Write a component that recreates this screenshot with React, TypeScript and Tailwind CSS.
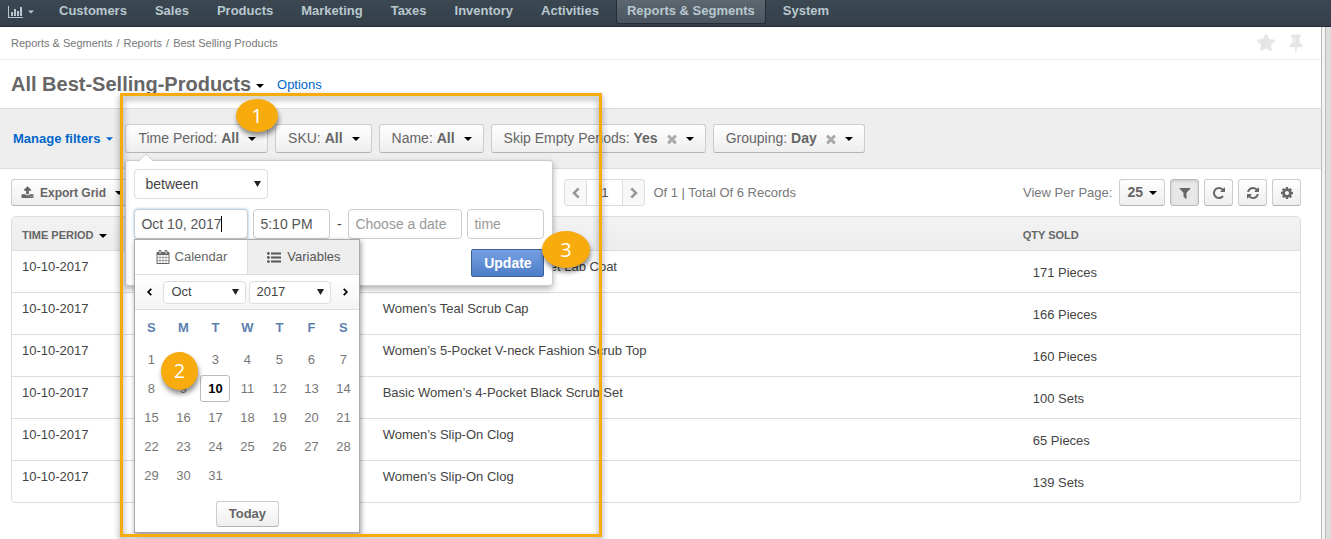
import React from "react";

const PATHS = {
  star: "M1728 647q0 22-26 48l-363 354 86 500q1 7 1 20 0 21-10.5 35.5t-30.5 14.5q-19 0-40-12l-449-236-449 236q-22 12-40 12-21 0-31.5-14.5t-10.5-35.5q0-6 2-20l86-500-364-354q-25-27-25-48 0-37 56-46l502-73 225-455q19-41 49-41t49 41l225 455 502 73q56 9 56 46z",
  pin: "M800 864v-448q0-14-9-23t-23-9-23 9-9 23v448q0 14 9 23t23 9 23-9 9-23zm672 352q0 26-19 45t-45 19h-429l-51 483q-2 12-10.5 20.5t-20.5 8.5h-1q-27 0-32-27l-76-485h-404q-26 0-45-19t-19-45q0-123 78.5-221.5t177.5-98.5v-512q-52 0-90-38t-38-90 38-90 90-38h640q52 0 90 38t38 90-38 90-90 38v512q99 0 177.5 98.5t78.5 221.5z",
  filter:
    "M1595 295q17 41-14 70l-493 493v742q0 42-39 59-13 5-25 5-27 0-45-19l-256-256q-19-19-19-45v-486l-493-493q-31-29-14-70 17-39 59-39h1280q42 0 59 39z",
  repeat:
    "M1664 256v448q0 26-19 45t-45 19h-448q-42 0-59-40-17-39 14-69l138-138q-148-137-349-137-104 0-198.5 40.5t-163.5 109.5-109.5 163.5-40.5 198.5 40.5 198.5 109.5 163.5 163.5 109.5 198.5 40.5q119 0 225-52t179-147q7-10 23-12 15 0 25 9l137 138q9 8 9.5 20.5t-7.5 22.5q-109 132-264 204.5t-327 72.5q-156 0-298-61t-245-164-164-245-61-298 61-298 164-245 245-164 298-61q147 0 284.5 55.5t244.5 156.5l130-129q29-31 70-14 39 17 39 59z",
  refresh:
    "M1639 1056q0 5-1 7-64 268-268 434.5t-478 166.5q-146 0-282.5-55t-243.5-157l-129 129q-19 19-45 19t-45-19-19-45v-448q0-26 19-45t45-19h448q26 0 45 19t19 45-19 45l-137 137q71 66 161 102t187 36q134 0 250-65t186-179q11-17 53-117 8-23 30-23h192q13 0 22.5 9.5t9.5 22.5zm25-800v448q0 26-19 45t-45 19h-448q-26 0-45-19t-19-45 19-45l138-138q-148-137-349-137-134 0-250 65t-186 179q-11 17-53 117-8 23-30 23h-199q-13 0-22.5-9.5t-9.5-22.5v-7q65-268 270-434.5t480-166.5q146 0 284 55.5t245 156.5l130-129q19-19 45-19t45 19 19 45z",
  cog: "M1152 896q0-106-75-181t-181-75-181 75-75 181 75 181 181 75 181-75 75-181zm512-109v222q0 12-8 23t-20 13l-185 28q-19 54-39 91 35 50 107 138 10 12 10 25t-9 23q-27 37-99 108t-94 71q-12 0-26-9l-138-108q-44 23-91 38-16 136-29 186-7 28-36 28h-222q-14 0-24.5-8.5t-11.5-21.5l-28-184q-49-16-90-37l-141 107q-10 9-25 9-14 0-25-11-126-114-165-168-7-10-7-23 0-12 8-23 15-21 51-66.5t54-70.5q-27-50-41-99l-183-27q-13-2-21-12.5t-8-23.5v-222q0-12 8-23t19-13l186-28q14-46 39-92-40-57-107-138-10-12-10-24 0-10 9-23 26-36 98.5-107.5t94.5-71.5q13 0 26 10l138 107q44-23 91-38 16-136 29-186 7-28 36-28h222q14 0 24.5 8.5t11.5 21.5l28 184q49 16 90 37l142-107q9-9 24-9 13 0 25 10 129 119 165 170 7 8 7 22 0 12-8 23-15 21-51 66.5t-54 70.5q26 50 41 98l183 28q13 2 21 12.5t8 23.5z",
  upload:
    "M1344 1472q0-26-19-45t-45-19-45 19-19 45 19 45 45 19 45-19 19-45zm256 0q0-26-19-45t-45-19-45 19-19 45 19 45 45 19 45-19 19-45zm128-224v320q0 40-28 68t-68 28h-1472q-40 0-68-28t-28-68v-320q0-40 28-68t68-28h427q21 56 70.5 92t110.5 36h256q61 0 110.5-36t70.5-92h427q40 0 68 28t28 68zm-325-648q-17 40-59 40h-256v448q0 26-19 45t-45 19h-256q-26 0-45-19t-19-45v-448h-256q-42 0-59-40-17-39 14-69l448-448q18-19 45-19t45 19l448 448q31 30 14 69z",
  times:
    "M1490 1322q0 40-28 68l-136 136q-28 28-68 28t-68-28l-294-294-294 294q-28 28-68 28t-68-28l-136-136q-28-28-28-68t28-68l294-294-294-294q-28-28-28-68t28-68l136-136q28-28 68-28t68 28l294 294 294-294q28-28 68-28t68 28l136 136q28 28 28 68t-28 68l-294 294 294 294q28 28 28 68z",
  calendar:
    "M192 1664h288v-288h-288v288zm352 0h320v-288h-320v288zm-352-352h288v-320h-288v320zm352 0h320v-320h-320v320zm-352-384h288v-288h-288v288zm736 736h320v-288h-320v288zm-384-736h320v-288h-320v288zm768 736h288v-288h-288v288zm-384-352h320v-320h-320v320zm-352-864v-288q0-13-9.5-22.5t-22.5-9.5h-64q-13 0-22.5 9.5t-9.5 22.5v288q0 13 9.5 22.5t22.5 9.5h64q13 0 22.5-9.5t9.5-22.5zm736 864h288v-320h-288v320zm-384-384h320v-288h-320v288zm384 0h288v-288h-288v288zm32-480v-288q0-13-9.5-22.5t-22.5-9.5h-64q-13 0-22.5 9.5t-9.5 22.5v288q0 13 9.5 22.5t22.5 9.5h64q13 0 22.5-9.5t9.5-22.5zm384-64v1280q0 52-38 90t-90 38h-1408q-52 0-90-38t-38-90v-1280q0-52 38-90t90-38h128v-96q0-66 47-113t113-47h64q66 0 113 47t47 113v96h384v-96q0-66 47-113t113-47h64q66 0 113 47t47 113v96h128q52 0 90 38t38 90z",
};

function Icon({ name, className }: { name: keyof typeof PATHS; className: string }) {
  return (
    <svg viewBox="0 0 1792 1792" fill="currentColor" className={`shrink-0 ${className}`} aria-hidden="true">
      <path d={PATHS[name]} />
    </svg>
  );
}

function Caret({ className = "" }: { className?: string }) {
  return (
    <svg viewBox="0 0 8 4" fill="currentColor" className={`h-1 w-2 shrink-0 ${className}`} aria-hidden="true">
      <path d="M0 0h8L4 4z" />
    </svg>
  );
}

function Chevron({ left, className }: { left?: boolean; className: string }) {
  return (
    <svg viewBox="0 0 10 12" fill="none" stroke="currentColor" className={className} aria-hidden="true">
      <path d={left ? "M7.7 1.3 3 6l4.7 4.7" : "M2.3 1.3 7 6l-4.7 4.7"} strokeWidth="2.6" />
    </svg>
  );
}

function SelectBox({ label, value, className }: { label: string; value: string; className: string }) {
  return (
    <div className="relative flex w-fit">
      <select
        aria-label={label}
        defaultValue={value}
        className={`appearance-none rounded-[4px] border border-[#ddd] bg-white text-[#444] outline-none ${className}`}
      >
        <option>{value}</option>
      </select>
      <svg
        viewBox="0 0 7 6"
        className="pointer-events-none absolute top-1/2 right-[7px] h-1.5 w-[7px] -translate-y-1/2 text-[#222]"
        aria-hidden="true"
      >
        <path d="M0 0h7L3.5 6z" fill="currentColor" />
      </svg>
    </div>
  );
}

const NAV = ["Customers", "Sales", "Products", "Marketing", "Taxes", "Inventory", "Activities", "Reports & Segments", "System"];

function TopNav() {
  return (
    <nav className="flex h-[27px] shrink-0 items-start border-b border-[#222b33] bg-gradient-to-b from-[#3b4851] to-[#343f49] pl-2">
      <button type="button" aria-label="Dashboards" className="mr-[14px] flex h-[23px] items-center gap-[5px] text-[#b9c8cf]">
        <svg viewBox="0 0 15 12" className="h-3 w-[15px]" fill="currentColor" aria-hidden="true">
          <path d="M0 0h1v11h14v1H0zM3 6h2v4H3zM6 3h2v7H6zM9 5h2v5H9zM12 1h2v9h-2z" />
        </svg>
        <Caret className="w-[6px]" />
      </button>
      <ul className="flex gap-[6px]">
        {NAV.map((item) => (
          <li key={item}>
            <a
              href="#"
              className={
                item === "Reports & Segments"
                  ? "block h-6 rounded-b-[3px] border border-t-0 border-[#242d35] bg-gradient-to-b from-[#5d6770] to-[#4a545e] px-[10px] text-[13px] leading-[22px] font-bold text-[#b9c8cf]"
                  : "block h-6 border border-t-0 border-transparent px-[10px] text-[13px] leading-[22px] font-bold text-[#b9c8cf]"
              }
            >
              {item}
            </a>
          </li>
        ))}
      </ul>
    </nav>
  );
}

const BUTTON = "flex items-center rounded-[3px] border border-[#ccc] border-b-[#b3b3b3] bg-gradient-to-b from-white to-[#eee] text-[#666]";

function FilterButton({ label, value, removable }: { label: string; value: string; removable?: boolean }) {
  return (
    <button type="button" className={`h-[29px] pr-[11px] pl-3 text-[14px] whitespace-nowrap ${BUTTON}`}>
      <span>
        {label}: <b>{value}</b>
      </span>
      {removable && <Icon name="times" className="ml-[7px] size-[14px] text-[#aaa]" />}
      <Caret className={removable ? "ml-[7px] text-black" : "ml-[9px] text-black"} />
    </button>
  );
}

const INPUT = "h-[30px] rounded-[4px] border border-[#ccc] bg-white px-[6px] text-[14px] text-[#555] outline-none placeholder:text-[#999]";

const DAY_NAMES = ["S", "M", "T", "W", "T", "F", "S"];
const DAYS = Array.from({ length: 31 }, (_, i) => i + 1);

function DatePicker() {
  return (
    <div className="absolute top-[30px] left-0 z-20 w-[226px] border border-[#aaa] bg-white shadow-[1px_2px_5px_rgba(0,0,0,0.4)]">
      <div className="flex h-[35px] text-[13px] text-[#666]">
        <button type="button" className="flex w-[112px] items-center justify-center gap-[5px] border-b border-[#ddd] bg-white">
          <Icon name="calendar" className="size-[14px]" />
          Calendar
        </button>
        <button type="button" className="flex flex-1 items-center justify-center gap-[6px] border-b border-l border-[#ddd] bg-[#eee] text-[#555]">
          <svg viewBox="0 0 14 11" className="h-[11px] w-[14px]" fill="currentColor" aria-hidden="true">
            <circle cx="1.4" cy="1.4" r="1.4" />
            <circle cx="1.4" cy="5.5" r="1.4" />
            <circle cx="1.4" cy="9.6" r="1.4" />
            <path d="M4 .5h10v2H4zM4 4.5h10v2H4zM4 8.5h10v2H4z" />
          </svg>
          Variables
        </button>
      </div>
      <div className="flex h-[35px] items-center border-b border-[#ddd] bg-gradient-to-b from-white to-[#f4f4f4]">
        <button type="button" aria-label="Previous month" className="flex w-7 justify-center text-black">
          <Chevron left className="h-2 w-[7px]" />
        </button>
        <div className="flex gap-[3px]">
          <SelectBox label="Month" value="Oct" className="h-[23px] w-[83px] px-[7px] text-[13px]" />
          <SelectBox label="Year" value="2017" className="h-[23px] w-[82px] px-[6px] text-[13px]" />
        </div>
        <button type="button" aria-label="Next month" className="flex w-7 justify-center text-black">
          <Chevron className="h-2 w-[7px]" />
        </button>
      </div>
      <div className="grid grid-cols-7 pt-1 text-center text-[13px]">
        {DAY_NAMES.map((d, i) => (
          <span key={i} className="h-[31px] leading-[28px] font-bold text-[#5c7fae]">
            {d}
          </span>
        ))}
        {DAYS.map((d) => (
          <button
            key={d}
            type="button"
            className={
              d === 10
                ? "m-px h-[27px] rounded-[3px] border border-[#bbb] bg-white font-bold text-black"
                : "h-[29px] text-[#777]"
            }
          >
            {d}
          </button>
        ))}
      </div>
      <div className="flex justify-center pt-[11px] pb-[5px]">
        <button type="button" className={`h-[26px] px-3 text-[13px] font-bold ${BUTTON}`}>
          Today
        </button>
      </div>
    </div>
  );
}

function TimePeriodPopover() {
  return (
    <div className="absolute top-[36px] left-0 z-10 w-[428px] rounded-[3px] border border-[#ccc] bg-white p-2 shadow-[0_3px_6px_rgba(0,0,0,0.3)]">
      <svg viewBox="0 0 16 9" className="absolute -top-2 left-3 h-[9px] w-4" aria-hidden="true">
        <path d="M0 9 8 1l8 8z" fill="#fff" />
        <path d="M0 8.5 8 .8l8 7.7" fill="none" stroke="#ccc" />
      </svg>
      <div className="mb-[10px]">
        <SelectBox label="Condition" value="between" className="h-[30px] w-[134px] px-[10px] text-[14px]" />
      </div>
      <div className="flex items-center">
        <div className="relative mr-[5px] flex">
          <input
            aria-label="Start date"
            defaultValue="Oct 10, 2017"
            className={`w-[114px] ${INPUT} border-[#5aa7e8] shadow-[0_0_3px_rgba(90,167,232,0.7)]`}
          />
          <span className="absolute top-[7px] left-[87px] h-4 w-px bg-black" />
          <DatePicker />
        </div>
        <input aria-label="Start time" defaultValue="5:10 PM" className={`w-[77px] ${INPUT}`} />
        <span className="flex-1 text-center text-[14px] text-[#444]">-</span>
        <input aria-label="End date" placeholder="Choose a date" className={`mr-[5px] w-[114px] ${INPUT}`} />
        <input aria-label="End time" placeholder="time" className={`w-[77px] ${INPUT}`} />
      </div>
      <div className="mt-[10px] flex justify-end">
        <button
          type="button"
          className="h-7 w-[73px] rounded-[2px] border border-[#3d6299] bg-gradient-to-b from-[#76a0e2] to-[#4d7dc8] text-[14px] font-bold text-white"
        >
          Update
        </button>
      </div>
    </div>
  );
}

function Pager() {
  const arrow = "flex w-[23px] items-center justify-center border border-[#ddd] bg-[#f8f8f8] text-[#999]";
  return (
    <div className="flex items-center text-[13px] text-[#777]">
      <div className="mr-2 flex h-[27px]">
        <button type="button" aria-label="Previous page" className={`rounded-l-[3px] ${arrow}`}>
          <Chevron left className="h-3 w-[10px]" />
        </button>
        <input
          aria-label="Page"
          defaultValue="1"
          className="w-[35px] border-y border-[#ddd] bg-white text-center text-[#555] outline-none"
        />
        <button type="button" aria-label="Next page" className={`rounded-r-[3px] ${arrow}`}>
          <Chevron className="h-3 w-[10px]" />
        </button>
      </div>
      Of 1 | Total Of 6 Records
    </div>
  );
}

function Toolbar() {
  const tool = `h-[27px] w-[29px] justify-center ${BUTTON}`;
  return (
    <div className="flex items-center py-[10px] pr-5 pl-[11px]">
      <div className="flex basis-[42.9%]">
        <button type="button" className={`h-[27px] px-[9px] text-[12px] font-bold ${BUTTON}`}>
          <Icon name="upload" className="mr-[6px] size-[13px]" />
          Export Grid
          <Caret className="ml-[9px] text-black" />
        </button>
      </div>
      <Pager />
      <div className="ml-auto flex items-center gap-[5px]">
        <span className="mr-0.5 text-[13px] text-[#777]">View Per Page:</span>
        <button type="button" className={`h-[27px] px-[7px] text-[14px] font-bold ${BUTTON}`}>
          25
          <Caret className="ml-[6px] text-black" />
        </button>
        <button
          type="button"
          aria-label="Filters"
          className="flex h-[27px] w-[29px] items-center justify-center rounded-[3px] border border-[#bbb] bg-[#e8e8e8] text-[#666] shadow-[inset_0_1px_3px_rgba(0,0,0,0.15)]"
        >
          <Icon name="filter" className="size-[14px]" />
        </button>
        <button type="button" aria-label="Refresh" className={tool}>
          <Icon name="repeat" className="size-[14px]" />
        </button>
        <button type="button" aria-label="Reset" className={tool}>
          <Icon name="refresh" className="size-[14px]" />
        </button>
        <button type="button" aria-label="Grid settings" className={tool}>
          <Icon name="cog" className="size-[14px]" />
        </button>
      </div>
    </div>
  );
}

const ROWS = [
  ["10-10-2017", "Women’s White Plain 5-Pocket Lab Coat", "171 Pieces"],
  ["10-10-2017", "Women’s Teal Scrub Cap", "166 Pieces"],
  ["10-10-2017", "Women’s 5-Pocket V-neck Fashion Scrub Top", "160 Pieces"],
  ["10-10-2017", "Basic Women’s 4-Pocket Black Scrub Set", "100 Sets"],
  ["10-10-2017", "Women’s Slip-On Clog", "65 Pieces"],
  ["10-10-2017", "Women’s Slip-On Clog", "139 Sets"],
];

function Grid() {
  return (
    <div className="mr-5 ml-[11px] overflow-hidden rounded-[4px] border border-[#ddd]">
      <table className="w-full table-fixed border-separate border-spacing-0 text-left text-[13px] text-[#444]">
        <colgroup>
          <col className="w-[28%]" />
          <col className="w-[49.7%]" />
          <col />
        </colgroup>
        <thead>
          <tr className="h-[34px] bg-gradient-to-b from-[#f3f3f3] to-[#ececec] text-[11px] text-[#666]">
            <th className="border-b border-[#ddd] px-[10px] pt-1">
              <span className="flex items-center gap-[5px]">
                TIME PERIOD
                <Caret className="text-black" />
              </span>
            </th>
            <th className="border-b border-[#ddd]" />
            <th className="border-b border-[#ddd] px-[10px] pt-1">QTY SOLD</th>
          </tr>
        </thead>
        <tbody className="[&>tr:last-child>td]:border-b-0">
          {ROWS.map(([date, name, qty], i) => (
            <tr key={i} className="h-[42px] align-top leading-5 last:h-[41px]">
              <td className="border-b border-[#ddd] px-[10px] pt-[6px]">{date}</td>
              <td className="border-b border-[#ddd] px-[10px] pt-[6px]">{name}</td>
              <td className="border-b border-[#ddd] px-5 pt-3">{qty}</td>
            </tr>
          ))}
        </tbody>
      </table>
    </div>
  );
}

const BADGE =
  "absolute flex items-center justify-center rounded-[50%] bg-[#f8ab0c] font-['Open_Sans',sans-serif] text-[20px] text-white shadow-[1px_4px_5px_rgba(0,0,0,0.45)]";

function Annotations() {
  return (
    <div className="pointer-events-none absolute top-[93px] left-[120px] z-30 h-[444px] w-[482px]">
      <div className="size-full border-3 border-[#f8ab0c] drop-shadow-[0_3px_3px_rgba(0,0,0,0.45)]" />
      <span className={`top-[6px] left-[116px] h-[33px] w-[42px] ${BADGE}`}>1</span>
      <span className={`top-[259px] left-[41px] h-[38px] w-[37px] ${BADGE}`}>2</span>
      <span className={`top-[138px] left-[422px] h-[37px] w-[48px] ${BADGE}`}>3</span>
    </div>
  );
}

export default function App() {
  return (
    <div className="relative flex min-h-screen flex-col bg-white font-['Liberation_Sans',Arial,sans-serif]">
      <TopNav />
      <div className="flex flex-1">
        <main className="min-w-0 flex-1">
          <div className="flex h-[33px] items-center justify-between border-b border-[#eee] pr-[15px] pl-[11px]">
            <ol className="flex gap-1 text-[11px] text-[#777]">
              <li>Reports &amp; Segments</li>
              <li>/</li>
              <li>Reports</li>
              <li>/</li>
              <li>Best Selling Products</li>
            </ol>
            <div className="flex items-center gap-[10px] text-[#e5e5e5]">
              <button type="button" aria-label="Add to favorites">
                <Icon name="star" className="size-5" />
              </button>
              <button type="button" aria-label="Pin page">
                <Icon name="pin" className="size-5" />
              </button>
            </div>
          </div>
          <div className="flex h-12 items-center pl-[11px]">
            <h1 className="text-[20px] font-bold text-[#666]">All Best-Selling-Products</h1>
            <Caret className="mt-1 ml-[5px] text-black" />
            <a href="#" className="ml-[13px] pt-0.5 text-[13px] text-[#06c]">
              Options
            </a>
          </div>
          <div className="flex h-[61px] items-center gap-[7px] border-y border-[#ddd] bg-[#eee] pl-[13px]">
            <button type="button" className="mr-[5px] flex items-center gap-[6px] text-[13px] font-bold text-[#06c]">
              Manage filters
              <Caret className="w-[7px]" />
            </button>
            <div className="relative">
              <FilterButton label="Time Period" value="All" />
              <TimePeriodPopover />
            </div>
            <FilterButton label="SKU" value="All" />
            <FilterButton label="Name" value="All" />
            <FilterButton label="Skip Empty Periods" value="Yes" removable />
            <FilterButton label="Grouping" value="Day" removable />
          </div>
          <Toolbar />
          <Grid />
        </main>
        <aside className="w-[10px] shrink-0 border-l border-[#bbb] bg-[#f3f3f3] pl-[3px]">
          <div className="h-full border-l border-[#bbb] bg-[#ddd]" />
        </aside>
      </div>
      <Annotations />
    </div>
  );
}
